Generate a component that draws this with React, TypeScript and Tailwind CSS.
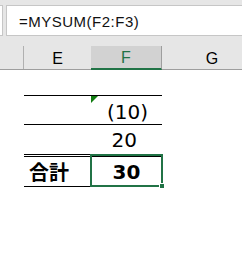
import React from 'react'

const num = "font-['DejaVu_Sans',sans-serif] text-[20px] leading-none text-black"

export default function App() {
  return (
    <div className="w-[242px] h-[264px] overflow-hidden bg-white select-none">
      {/* formula bar */}
      <div className="flex h-[46px] bg-[#e6e6e6] pt-[5px]">
        <div className="h-[31px] w-[3px] border-y border-r border-[#c6c6c6] bg-white" />
        <div className="ml-[3px] flex h-[31px] flex-1 items-center border-y border-l border-[#c6c6c6] bg-white pl-[12px] pt-[1px]">
          <span className="font-['Liberation_Sans',sans-serif] text-[15px] leading-none tracking-[0.5px] text-[#111]">
            =MYSUM(F2:F3)
          </span>
        </div>
      </div>

      {/* column headers */}
      <div className="-mt-[10px] flex h-[34px] items-end bg-[#e6e6e6]">
        <div className="grid h-[24px] w-full grid-cols-[24px_67px_71px_100px] border-b border-[#9e9e9e] font-['Liberation_Sans',sans-serif] text-[16px] leading-none">
          <div className="border-r border-[#b0b0b0]" />
          <div className="flex items-center justify-center pt-[2px] text-black">E</div>
          <div className="-mb-px flex items-center justify-center border-r border-[#9e9e9e] border-b-2 border-b-[#217346] bg-[#d2d2d2] pt-[2px] text-[#217346]">
            F
          </div>
          <div className="flex items-center justify-center pt-[2px] text-black">G</div>
        </div>
      </div>

      {/* cells */}
      <div className="grid grid-cols-[24px_67px_71px_100px]">
        {/* row 1 */}
        <div className="h-[25px]" />
        <div />
        <div />
        <div />

        {/* row 2 */}
        <div className="h-[29px]" />
        <div className="border-t border-black" />
        <div className="relative flex items-center justify-end border-t border-black pr-[14px] pt-[3px]">
          <div className="absolute left-0 top-0 h-0 w-0 border-r-[7px] border-t-[7px] border-r-transparent border-t-[#107c10]" />
          <span className={num}>(10)</span>
        </div>
        <div />

        {/* row 3 */}
        <div className="h-[30px]" />
        <div className="border-t border-black" />
        <div className="flex items-center justify-end border-t border-black pr-[25px] pt-[1px]">
          <span className={num}>20</span>
        </div>
        <div />

        {/* row 4 */}
        <div className="h-[33px]" />
        <div className="flex items-center border-y border-t-[3px] border-double border-black pl-[5px]">
          <span className="font-['Noto_Sans_CJK_JP',sans-serif] text-[20px] font-bold leading-none text-black">合計</span>
        </div>
        <div className="relative flex items-center justify-center border-y border-t-[3px] border-double border-black pt-[1px]">
          <span className="font-['DejaVu_Sans',sans-serif] text-[20px] font-bold leading-none text-black">30</span>
          <div className="absolute -left-px -right-px -top-[3px] -bottom-px border-2 border-[#217346]" />
          <div className="absolute -bottom-[3px] -right-[3px] h-[6px] w-[6px] border border-white bg-[#217346]" />
        </div>
        <div />
      </div>
    </div>
  )
}
